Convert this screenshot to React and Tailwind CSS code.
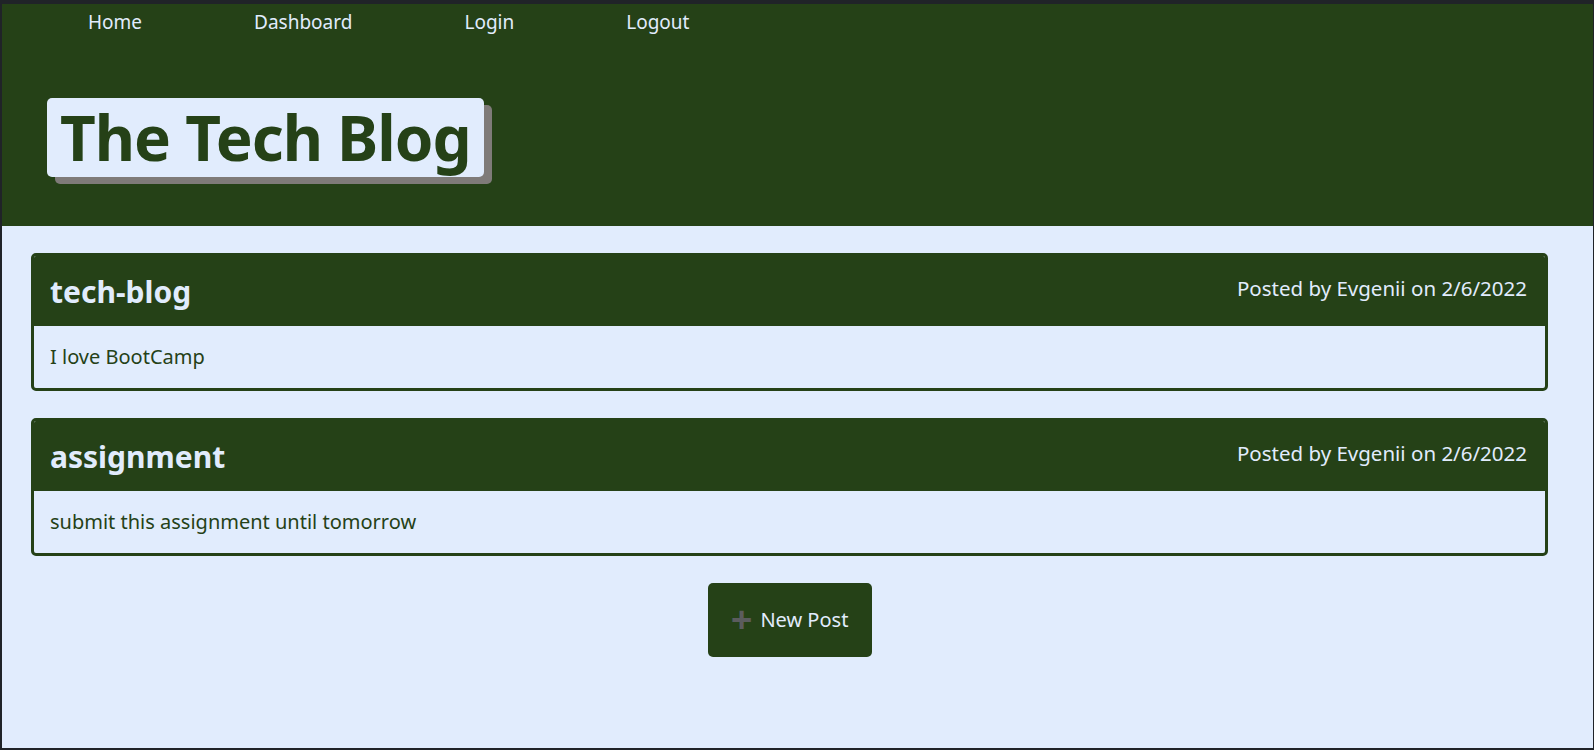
import React from "react";

const posts = [
  { title: "tech-blog", author: "Evgenii", date: "2/6/2022", body: "I love BootCamp" },
  { title: "assignment", author: "Evgenii", date: "2/6/2022", body: "submit this assignment until tomorrow" },
];

export default function App() {
  return (
    <div
      className="h-[750px] bg-[#202328] pt-[4px] pl-[2px] pr-[1px] pb-[2px]"
      style={{ fontFamily: '"Noto Sans", "Open Sans", sans-serif' }}
    >
      <div className="h-full flex flex-col bg-[#e1ecfd]">
        <header className="h-[222px] bg-[#254117] flex flex-col">
          <nav className="flex gap-[112px] pl-[86px] pt-[4px] text-[19px] leading-[28px] text-[#e1ecfd]">
            <a>Home</a>
            <a>Dashboard</a>
            <a>Login</a>
            <a>Logout</a>
          </nav>
          <div className="pl-[45px] pt-[62px]">
            <div className="inline-block rounded-[5px] bg-[#e1ecfd] px-[13px] shadow-[8px_7px_0_0_#7f7b79]">
              <h1 className="text-[62px] leading-[79px] font-bold text-[#254117] tracking-[-1px]">
                The Tech Blog
              </h1>
            </div>
          </div>
        </header>
        <main className="ml-[29px] mr-[45px] pt-[27px] flex flex-col">
          {posts.map((p) => (
            <div
              key={p.title}
              className="mb-[27px] rounded-[5px] border-[3px] border-[#254117] overflow-hidden"
            >
              <div className="h-[70px] bg-[#254117] flex items-center justify-between pl-[16px] pr-[18px] text-[#e1ecfd]">
                <h2 className="text-[30px] font-bold leading-none pt-[2px]">{p.title}</h2>
                <span className="text-[20.5px] self-start pt-[17px]">
                  Posted by {p.author} on {p.date}
                </span>
              </div>
              <div className="h-[62px] flex items-center pl-[16px] text-[20px] text-[#254117]">
                {p.body}
              </div>
            </div>
          ))}
          <div className="flex justify-center">
            <button className="w-[164px] h-[74px] rounded-[5px] bg-[#254117] flex items-center justify-center gap-[8px] text-[20px] text-[#e1ecfd]">
              <span className="text-[#5b5c5e] text-[38px] font-bold leading-none -mt-[4px]">+</span>
              <span>New Post</span>
            </button>
          </div>
        </main>
      </div>
    </div>
  );
}
